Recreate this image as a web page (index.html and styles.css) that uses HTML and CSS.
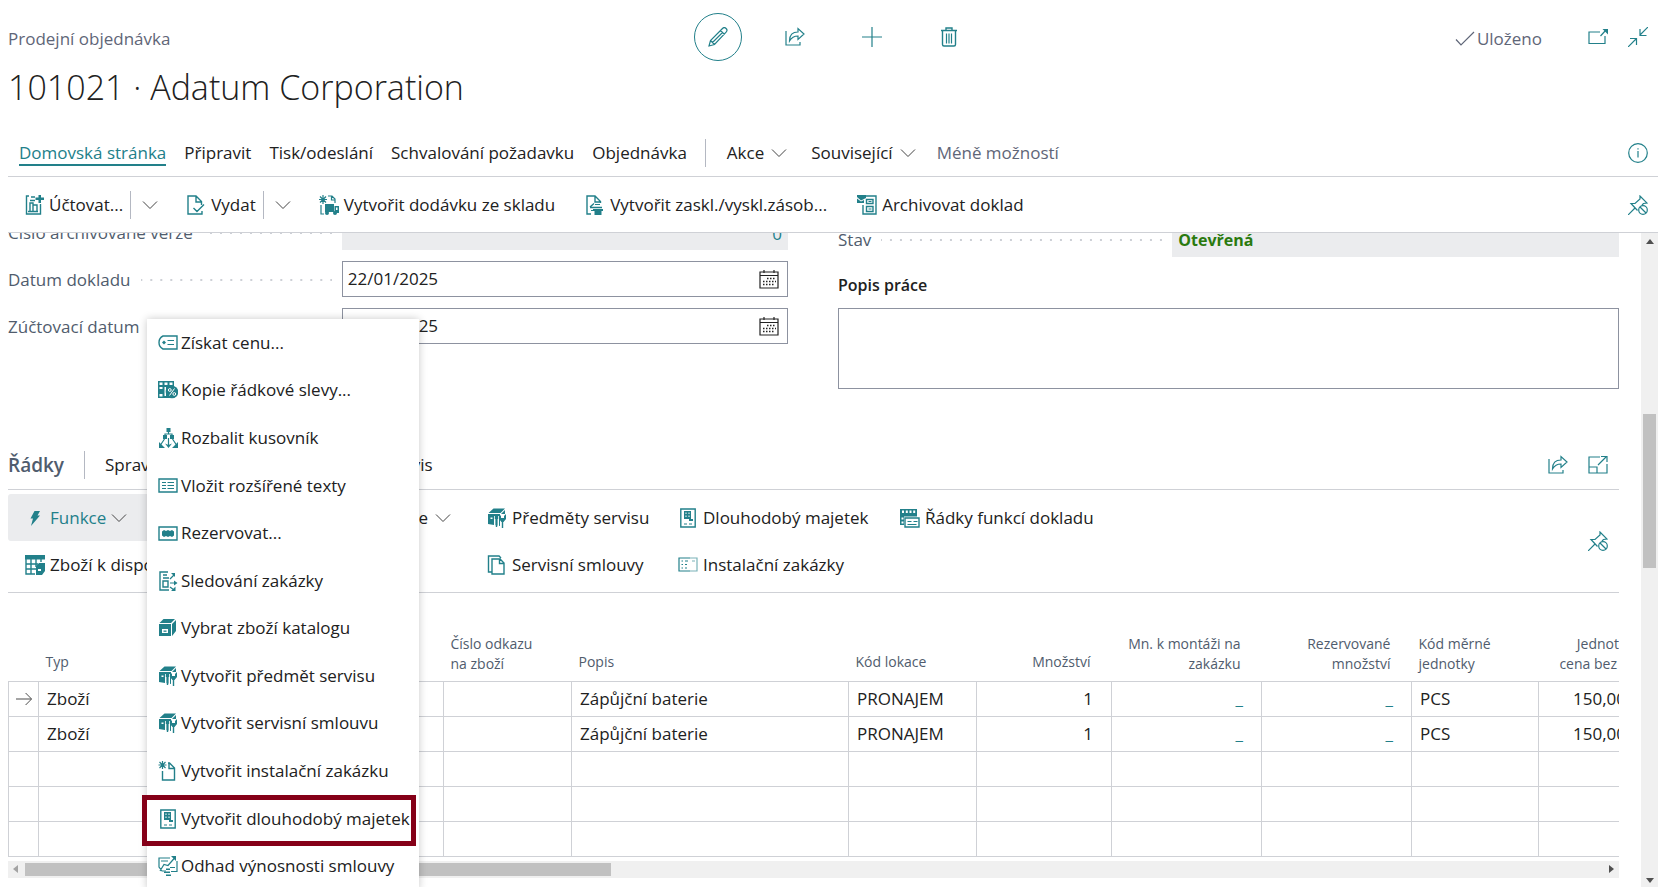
FILE: index.html
```html
<!DOCTYPE html>
<html lang="cs">
<head>
<meta charset="utf-8">
<title>101021 · Adatum Corporation</title>
<link rel="stylesheet" href="styles.css">
</head>
<body>
<svg class="sprite" aria-hidden="true">
  <symbol id="i-chev" viewBox="0 0 16 16"><path class="s thin" d="M1 4.500l7 7 7-7"/></symbol>
  <symbol id="i-pencil" viewBox="0 0 20 20"><path class="s" d="M1 19l1.500-5.500L14.500 1.500a2.200 2.200 0 0 1 3.600 3.600L6.500 17.500zM2.500 13.500l4 4M12.500 3.500l4 4M4.500 15.500l10-10"/></symbol>
  <symbol id="i-share" viewBox="0 0 20 20"><path class="s" d="M1 4v14h14v-3M4.500 14c0-6 3-9 8.500-9V1.500l6 5.500-6 5.500V9c-4 0-6.500 1.500-8.500 5z"/></symbol>
  <symbol id="i-plus" viewBox="0 0 20 20"><path class="s" d="M10 0v20M0 10h20"/></symbol>
  <symbol id="i-trash" viewBox="0 0 20 20"><path class="s w" d="M2 3.500h16M7 3V1h6v2M3.500 4v13.500q0 1.500 1.500 1.500h10q1.500 0 1.500-1.500V4"/><path class="s" d="M7.500 6.500v10M10 6.500v10M12.500 6.500v10"/></symbol>
  <symbol id="i-check" viewBox="0 0 20 20"><path class="s" d="M1 10.500l5 5.500L19 3"/></symbol>
  <symbol id="i-popout" viewBox="0 0 20 20"><path class="s" d="M12 5H1v11.500h16V9M12.500 9L18 3"/><path class="f" d="M14.500 2H20v5.500z"/></symbol>
  <symbol id="i-collapse" viewBox="0 0 20 20"><path class="s" d="M20 0l-8 8M12 2v6.500h6.500M0 20l8-8M8.500 18v-6.500H2"/></symbol>
  <symbol id="i-info" viewBox="0 0 20 20"><circle class="s" cx="10" cy="10" r="9.300"/><path class="s" d="M10 8v6.500M10 5.200v1.300"/></symbol>
  <symbol id="i-pin" viewBox="0 0 20 20"><path class="s" d="M0 20l7-7M9.500 15.500L3 8.500h4L12 4V1l7 7-3.500.5-1.500 1.500"/><circle class="s" cx="15" cy="15" r="4.300"/><path class="s" d="M12 12l6 6"/></symbol>
  <symbol id="i-expand" viewBox="0 0 20 20"><path class="s" d="M12 2H1v16h18V9M1 12h8v6M10 10l8-8M13 1.500h6V7"/></symbol>
  <symbol id="i-post" viewBox="0 0 20 20"><path class="s w" d="M5 1H2.500v18h14V9M7 2h4M6 5.500h5M6 16V8h3v8M9 10h4v6M4 16.500h10"/><path class="f" d="M14.500 0h2.500v2.500h3v2.500h-3v3h-2.500V5h-3V2.500h3z"/></symbol>
  <symbol id="i-release" viewBox="0 0 20 20"><path class="s w" d="M16 16v3H2V1h8l5.500 5.500V10M10 1v6h5.500M7.500 13l3.500 3.500 7-7"/></symbol>
  <symbol id="i-ship" viewBox="0 0 20 20"><path class="s" d="M4 0v9M0 4.500h8M1 1.500l6 6M7 1.500l-6 6M9 1h4l3 3v4M12.500 1v4H16M2 10v9h3"/><path class="f" d="M6 9h9v8H6zM15.500 11H20v7h-4.500z"/><circle class="f" cx="8" cy="18" r="2"/><circle class="f" cx="16" cy="18" r="2"/><path class="k" d="M17 12.500h1.500V15H17z"/></symbol>
  <symbol id="i-put" viewBox="0 0 20 20"><path class="s w" d="M6 19H2V1h8l5.500 5.500V8M10 1v6h5.500M5 12.500h12M5 12l4-3.500"/><path class="s" d="M10 9.500h5M6 15.500h3"/><path class="f" d="M8 14h10v2h-1.500v4H9.500v-4H8z"/></symbol>
  <symbol id="i-archive" viewBox="0 0 20 20"><path class="f" d="M0 0h9v3L4 5.500 0 2z"/><path class="f" d="M0 3.500l4 3L7 5v3H0z"/><path class="s w" d="M9 1h10v18H6v-9M9.500 4.500h6.500v4H9.500zM9.500 11.500h6.500v5H9.500z"/><path class="s" d="M11.500 6.500h3M11.500 14h3"/></symbol>
  <symbol id="i-cal" viewBox="0 0 20 20"><path class="s" d="M1 3h18v16H1zM1 6.500h18M5 1v3M15 1v3"/><path class="s dots" d="M8 9.500h9M4 12.500h13M4 15.500h11"/></symbol>
  <symbol id="i-price" viewBox="0 0 20 20"><path class="s w" d="M5 3h14v13H5q-4-2-4-6.500T5 3z"/><path class="s" d="M9.500 7.500H16M9.500 11.500H16"/><path class="f" d="M6 7.500l2 2-2 2-2-2z"/></symbol>
  <symbol id="i-disc" viewBox="0 0 20 20"><path class="f" d="M0 1h16v17H0z"/><path class="k" d="M1.500 2.500h3v2.500h-3zM6.500 2.500h3V5h-3zM11.500 2.500h3V5h-3zM1.500 7h3v2h-3zM6.500 7H8v9H6.500zM1.500 14h3v2.500h-3z"/><circle class="f" cx="14" cy="12" r="6.300"/><path class="ks" d="M11.500 15.500l5-7"/><circle class="ks" cx="11.800" cy="10" r="1.400"/><circle class="ks" cx="16.300" cy="14" r="1.400"/></symbol>
  <symbol id="i-bom" viewBox="0 0 20 20"><path class="f" d="M8.500 0h4v4h-4zM5 7h4v4H5zM12 7h4v4h-4z"/><path class="s" d="M10.500 4v2.500M7 8V6h7v2M6.500 11l-4 6M14.500 11l4 6M10.500 10v8"/><path class="f" d="M1 14v6h6zM20 14v6h-6zM7 15.500l3.500 4.500 3.500-4.500-3.500 1.500z"/></symbol>
  <symbol id="i-text" viewBox="0 0 20 20"><path class="s w" d="M1 3h18v13H1z"/><path class="s" d="M4 6.500h4M9.500 6.500H16M4 9.500h4M9.500 9.500H16M4 12.500h4M9.500 12.500H16"/></symbol>
  <symbol id="i-reserve" viewBox="0 0 20 20"><path class="s w" d="M1 4h18v13H1z"/><path class="f" d="M4 8.500l2-1.500 2 1 2-1 2 1 2-1 2 1.500v4L14 14l-2-1-2 1-2-1-2 1-2-1.500z"/></symbol>
  <symbol id="i-track" viewBox="0 0 20 20"><path class="s w" d="M10 1H2v18h9M5 4h4M5 7h6M5 10h5v6H5z"/><path class="s" d="M12 12h5M12 8l4-4M12 16l4 3"/><path class="f" d="M13 2h4v4zM16 9.500l3.500 2.500-3.500 2.500zM13 20h4.500v-4.500z"/></symbol>
  <symbol id="i-box" viewBox="0 0 20 20"><path class="f" d="M1 6h12v12H1zM14 6l4-4v11l-4 5zM1.500 5l4-4h11.500l-4 4z"/><path class="k" d="M4 11h6v4H4z"/><path class="f" d="M5.500 12.500h3v1.300h-3z"/></symbol>
  <symbol id="i-service" viewBox="0 0 20 20"><path class="f" d="M1 6h12v12l-12-2zM1.500 5l5-4.500H18L13.500 5zM14 6l4-4v4z"/><path class="k" d="M3.500 9.500h2V11h-2zM7 8h1.500v10H7zM10.500 8H12v11h-1.500z"/><path class="s w" d="M9.500 9v10M15.500 11v9"/><path class="f" d="M7.800 7h3.400v4H7.800zM12 6l2 2v2h3V8l2-2v5l-2.500 3h-2L12 11z"/></symbol>
  <symbol id="i-newdoc" viewBox="0 0 20 20"><path class="s w" d="M4.500 10v9h12V7l-5-5H10M11 2v5.500h5"/><path class="s" d="M4.500 0v8M.5 4h8M1.500 1l6 6M7.500 1l-6 6"/></symbol>
  <symbol id="i-asset" viewBox="0 0 20 20"><path class="s w" d="M2.800 1h14.400v18H2.800z"/><path class="s" d="M6 16h3M11 16h3"/><path class="f" d="M6 3h7v8h2v2h-4v-2H6z"/><path class="k" d="M7.500 4.500h1V6h-1zM10.500 4.500h1V6h-1zM7.500 7.500h1V9h-1zM10.500 7.500h1V9h-1z"/></symbol>
  <symbol id="i-estimate" viewBox="0 0 20 20"><path class="s" d="M12 2H1v9l3 4h4M13 15.500h6V5M2 15L6 8.500l4 1 7-8M12 11.500h5M3 5h7"/><path class="f" d="M13 0h5v5zM8 12.500h4v1.500H8zM6 15.500h6v1.500H6zM8 18.500h5V20H8z"/></symbol>
  <symbol id="i-bolt" viewBox="0 0 20 20"><path class="f" d="M9.500 3h5.500l-2.500 4.500H15L6 18l2-7.500H5.500z"/></symbol>
  <symbol id="i-grid" viewBox="0 0 20 20"><path class="f" d="M0 0h20v4.500H0z"/><path class="s w" d="M1 4v15h9M1 9h12M1 14h10M6 4v15M11 4v8M16 4v3"/><path class="f" d="M11 11l3-3h6v8l-3 4h-6z"/><path class="k" d="M13 14h3v2h-3z"/></symbol>
  <symbol id="i-docs" viewBox="0 0 20 20"><path class="s w" d="M5 17H1.500V1H12l2 2M5 4h8l4 4v11H5zM12.500 4v4.500H17"/></symbol>
  <symbol id="i-install" viewBox="0 0 20 20"><path class="s" d="M12 3H1v13h11"/><path class="s pale" d="M12 3h7v13h-7M14 6h3"/><path class="s" d="M3.500 6H5M3.500 9.500H5M3.500 13H5M7 6h3M7 9.500h2M7 13h2"/></symbol>
  <symbol id="i-lines" viewBox="0 0 20 20"><path class="f" d="M0 1h17v8H5v8H0z"/><path class="k" d="M2 2.500h2v2.500H2zM5.800 2.500h2V5h-2zM9.500 2.500h2V5h-2zM13.200 2.500h2V5h-2zM1.500 9.500h2v2h-2zM1.500 13.500h2v2h-2z"/><path class="k" d="M4 8.500h16V20H4z"/><path class="s w" d="M5 10h14v9H5z"/><path class="s" d="M7.500 13.500h4M7.500 16.500h9M13.500 13.500h4"/></symbol>
  <symbol id="i-arrow" viewBox="0 0 20 20"><path class="s" d="M0 10h19M12 2.500l7.500 7.500-7.500 7.500"/></symbol>
</svg>

<div class="page">
  <header class="top">
    <span class="kind">Prodejní objednávka</span>
    <div class="top-tools">
      <button class="round" aria-label="Upravit"><svg class="ic"><use href="#i-pencil"/></svg></button>
      <button aria-label="Sdílet"><svg class="ic"><use href="#i-share"/></svg></button>
      <button aria-label="Nový"><svg class="ic"><use href="#i-plus"/></svg></button>
      <button aria-label="Odstranit"><svg class="ic"><use href="#i-trash"/></svg></button>
    </div>
    <div class="top-state">
      <span class="saved"><svg class="ic"><use href="#i-check"/></svg>Uloženo</span>
      <button aria-label="Otevřít v novém okně"><svg class="ic"><use href="#i-popout"/></svg></button>
      <button aria-label="Sbalit"><svg class="ic"><use href="#i-collapse"/></svg></button>
    </div>
  </header>
  <h1>101021 · Adatum Corporation</h1>

  <nav class="tabs">
    <a href="#" class="on">Domovská stránka</a>
    <a href="#">Připravit</a>
    <a href="#">Tisk/odeslání</a>
    <a href="#">Schvalování požadavku</a>
    <a href="#">Objednávka</a>
    <span class="rule"></span>
    <button class="more">Akce<svg class="chev"><use href="#i-chev"/></svg></button>
    <button class="more">Související<svg class="chev"><use href="#i-chev"/></svg></button>
    <a href="#" class="muted">Méně možností</a>
    <button class="end" aria-label="Informace"><svg class="ic"><use href="#i-info"/></svg></button>
  </nav>

  <div class="actions">
    <div class="split">
      <button><svg class="ic"><use href="#i-post"/></svg>Účtovat...</button>
      <button class="drop" aria-label="Další možnosti účtování"><svg class="chev"><use href="#i-chev"/></svg></button>
    </div>
    <div class="split">
      <button><svg class="ic"><use href="#i-release"/></svg>Vydat</button>
      <button class="drop" aria-label="Další možnosti vydání"><svg class="chev"><use href="#i-chev"/></svg></button>
    </div>
    <button><svg class="ic"><use href="#i-ship"/></svg>Vytvořit dodávku ze skladu</button>
    <button><svg class="ic"><use href="#i-put"/></svg>Vytvořit zaskl./vyskl.zásob...</button>
    <button><svg class="ic"><use href="#i-archive"/></svg>Archivovat doklad</button>
    <button class="end" aria-label="Odepnout"><svg class="ic"><use href="#i-pin"/></svg></button>
  </div>

  <div class="scroller">
    <main>
      <div class="form">
        <div class="col">
          <div class="field"><label for="f-arch">Číslo archivované verze</label><i class="dotline"></i><input id="f-arch" class="ro num" value="0" readonly></div>
          <div class="field"><label for="f-doc">Datum dokladu</label><i class="dotline"></i><span class="date"><input id="f-doc" value="22/01/2025"><svg class="ic"><use href="#i-cal"/></svg></span></div>
          <div class="field"><label for="f-post">Zúčtovací datum</label><i class="dotline"></i><span class="date"><input id="f-post" value="22/01/2025"><svg class="ic"><use href="#i-cal"/></svg></span></div>
        </div>
        <div class="col right">
          <div class="field"><label for="f-state">Stav</label><i class="dotline"></i><input id="f-state" class="ro state" value="Otevřená" readonly></div>
          <label class="work" for="f-work">Popis práce</label>
          <textarea id="f-work"></textarea>
        </div>
      </div>

      <section>
        <div class="lines-head">
          <h2>Řádky</h2>
          <span class="rule"></span>
          <a href="#">Spravovat</a>
          <a href="#">Servis</a>
          <div class="head-tools">
            <button aria-label="Sdílet řádky"><svg class="ic"><use href="#i-share"/></svg></button>
            <button aria-label="Rozbalit řádky"><svg class="ic"><use href="#i-expand"/></svg></button>
          </div>
        </div>
        <div class="lines-actions">
          <div class="grid">
            <button class="func" aria-haspopup="menu" aria-expanded="true"><svg class="ic"><use href="#i-bolt"/></svg>Funkce<svg class="chev"><use href="#i-chev"/></svg></button>
            <button class="last">Objednávce<svg class="chev"><use href="#i-chev"/></svg></button>
            <button><svg class="ic"><use href="#i-service"/></svg>Předměty servisu</button>
            <button><svg class="ic"><use href="#i-asset"/></svg>Dlouhodobý majetek</button>
            <button><svg class="ic"><use href="#i-lines"/></svg>Řádky funkcí dokladu</button>
            <button class="avail"><svg class="ic"><use href="#i-grid"/></svg>Zboží k dispozici</button>
            <button><svg class="ic"><use href="#i-docs"/></svg>Servisní smlouvy</button>
            <button><svg class="ic"><use href="#i-install"/></svg>Instalační zakázky</button>
          </div>
          <button class="end" aria-label="Odepnout řádky"><svg class="ic"><use href="#i-pin"/></svg></button>
        </div>
        <div class="table-wrap">
          <table>
            <colgroup><col class="c30"><col class="c405"><col class="c128"><col class="c277"><col class="c128"><col class="c135"><col class="c150"><col class="c150"><col class="c127"><col class="c132"></colgroup>
            <thead><tr><th></th><th class="one">Typ</th><th>Číslo odkazu<br>na zboží</th><th class="one">Popis</th><th class="one">Kód lokace</th><th class="one r">Množství</th><th class="r">Mn. k montáži na<br>zakázku</th><th class="r">Rezervované<br>množství</th><th>Kód měrné<br>jednotky</th><th class="r">Jednotková<br>cena bez DPH</th></tr></thead>
            <tbody>
              <tr><td class="mark"><svg class="chev"><use href="#i-arrow"/></svg></td><td>Zboží</td><td></td><td>Zápůjční baterie</td><td>PRONAJEM</td><td class="r">1</td><td class="r"><a href="#">_</a></td><td class="r"><a href="#">_</a></td><td>PCS</td><td class="price">150,000</td></tr>
              <tr><td></td><td>Zboží</td><td></td><td>Zápůjční baterie</td><td>PRONAJEM</td><td class="r">1</td><td class="r"><a href="#">_</a></td><td class="r"><a href="#">_</a></td><td>PCS</td><td class="price">150,000</td></tr>
              <tr><td></td><td></td><td></td><td></td><td></td><td></td><td></td><td></td><td></td><td></td></tr>
              <tr><td></td><td></td><td></td><td></td><td></td><td></td><td></td><td></td><td></td><td></td></tr>
              <tr><td></td><td></td><td></td><td></td><td></td><td></td><td></td><td></td><td></td><td></td></tr>
            </tbody>
          </table>
        </div>
        <div class="hbar"><i class="tri left"></i><i class="thumb"></i><i class="tri rightward"></i></div>
      </section>
    </main>
    <div class="vbar"><i class="tri up"></i><i class="thumb"></i><i class="tri down"></i></div>

    <ul class="menu">
      <li><button><svg class="ic"><use href="#i-price"/></svg>Získat cenu...</button></li>
      <li><button><svg class="ic"><use href="#i-disc"/></svg>Kopie řádkové slevy...</button></li>
      <li><button><svg class="ic"><use href="#i-bom"/></svg>Rozbalit kusovník</button></li>
      <li><button><svg class="ic"><use href="#i-text"/></svg>Vložit rozšířené texty</button></li>
      <li><button><svg class="ic"><use href="#i-reserve"/></svg>Rezervovat...</button></li>
      <li><button><svg class="ic"><use href="#i-track"/></svg>Sledování zakázky</button></li>
      <li><button><svg class="ic"><use href="#i-box"/></svg>Vybrat zboží katalogu</button></li>
      <li><button><svg class="ic"><use href="#i-service"/></svg>Vytvořit předmět servisu</button></li>
      <li><button><svg class="ic"><use href="#i-service"/></svg>Vytvořit servisní smlouvu</button></li>
      <li><button><svg class="ic"><use href="#i-newdoc"/></svg>Vytvořit instalační zakázku</button></li>
      <li class="picked"><button><svg class="ic"><use href="#i-asset"/></svg>Vytvořit dlouhodobý majetek</button></li>
      <li><button><svg class="ic"><use href="#i-estimate"/></svg>Odhad výnosnosti smlouvy</button></li>
    </ul>
  </div>
</div>
</body>
</html>
```
FILE: styles.css
```css
:root {
  --teal: #22808a;
  --ink: #212121;
  --label: #505c6d;
  --line: #cfd1d6;
  --edge: #8d92a0;
}
* { box-sizing: border-box; }
body {
  margin: 0;
  background: #fff;
  color: var(--ink);
  font: 17px/24px "Open Sans", "Noto Sans", sans-serif;
}
button, input, textarea { font: inherit; color: inherit; margin: 0; }
button {
  display: inline-flex;
  align-items: center;
  padding: 0;
  border: 0;
  background: none;
  white-space: nowrap;
}
a { color: inherit; text-decoration: none; white-space: nowrap; }
.sprite { position: absolute; width: 0; height: 0; }
.ic { width: 20px; height: 20px; flex: none; color: var(--teal); }
.chev { width: 16px; height: 16px; flex: none; color: #444; }
.s { fill: none; stroke: currentColor; stroke-width: 1.2; }
.w { stroke-width: 1.4; }
.thin { stroke-width: 1; }
.pale { opacity: .6; }
.f { fill: currentColor; }
.k { fill: #fff; }
.ks { fill: none; stroke: #fff; stroke-width: 1; }
.dots { stroke-dasharray: 1.500 1.500; stroke-width: 1.5; }

.page {
  display: flex;
  flex-direction: column;
  height: 100vh;
  padding: 13px 7px 0 8px;
  overflow: hidden;
}
.top { display: grid; grid-template-columns: 1fr auto 1fr; align-items: center; }
.kind, .saved, .muted { color: #5f6678; }
.kind, .saved { padding-top: 3px; }
.top-tools { display: flex; gap: 29px; }
.top-tools button { width: 48px; height: 48px; justify-content: center; }
.round { border: 1px solid var(--teal); border-radius: 50%; }
.top-state { display: flex; justify-content: flex-end; align-items: center; gap: 20px; padding-right: 10px; }
.saved { display: flex; align-items: center; gap: 2px; margin-right: 26px; }
.saved .ic { color: inherit; }
h1 { margin: 0; padding-top: 2px; font-size: 34px; line-height: 48px; font-weight: 300; }

.tabs {
  display: flex;
  align-items: center;
  gap: 18px;
  height: 66px;
  padding: 19px 10px 0 11px;
  border-bottom: 1px solid var(--line);
}
.tabs .on { color: var(--teal); box-shadow: 0 2px 0 var(--teal); line-height: 22px; }
.tabs .more { gap: 7px; margin: 0 3px; }
.rule { width: 1px; height: 28px; background: #b4b8c2; }
.end { margin-left: auto; }

.actions {
  display: flex;
  align-items: center;
  height: 56px;
  padding: 0 10px 0 16px;
  gap: 30px;
  flex: none;
  border-bottom: 1px solid var(--line);
}
.actions button { gap: 5px; }
.split { display: flex; align-items: center; gap: 7px; margin-right: -2px; }
.actions .drop { height: 28px; padding-left: 11px; border-left: 1px solid #b4b8c2; }

.scroller { position: relative; flex: 1; min-height: 0; display: flex; }
main { flex: 1; min-width: 0; overflow: hidden; padding-right: 22px; }
.form { display: grid; grid-template-columns: 780fr 781fr; gap: 50px; margin-top: -19px; }
.col { display: flex; flex-direction: column; gap: 11px; }
.right { padding-top: 7px; }
.field { display: grid; grid-template-columns: auto 1fr 57.2%; align-items: center; color: var(--label); }
.field label { padding-top: 2px; }
.dotline {
  height: 2px;
  margin: 2px 10px 0;
  background: linear-gradient(90deg, transparent 8px, #cdd0d6 8px) right top / 10px 2px;
}
.ro, .date { width: 100%; height: 36px; }
.ro { border: 0; padding: 2px 6px 0; background: #ebecee; }
.num { text-align: right; color: var(--teal); }
.state { color: #2a7a0e; font-weight: 700; font-size: 16px; }
.date { display: flex; align-items: center; padding-right: 8px; border: 1px solid var(--edge); }
.date input { flex: 1; min-width: 0; border: 0; padding: 0 5px; color: var(--ink); }
.date .ic { color: #222; }
.work { margin-top: 5px; font-size: 16px; font-weight: 600; line-height: 24px; }
.right textarea { height: 81px; border: 1px solid var(--edge); resize: none; }

.lines-head {
  display: grid;
  grid-template-columns: 76px 21px 281px auto 1fr;
  align-items: center;
  height: 50px;
  margin-top: 51px;
  border-bottom: 1px solid var(--line);
}
h2 { margin: 0; font-size: 19px; line-height: 26px; font-weight: 600; color: var(--label); }
.head-tools { display: flex; justify-content: flex-end; gap: 20px; padding-right: 11px; }
.lines-actions { display: flex; align-items: center; padding: 4px 11px 4px 0; border-bottom: 1px solid var(--line); }
.grid { display: grid; grid-template-columns: 300px 179px 191px 222px auto; grid-auto-rows: 47px; }
.grid button { gap: 5px; }
.grid .func { justify-self: start; width: 160px; padding-left: 17px; background: #ebecee; color: var(--teal); border-radius: 3px; }
.grid .last { justify-self: end; padding-right: 36px; gap: 7px; }
.grid .avail { grid-column: 1 / 3; padding-left: 17px; }

.table-wrap { overflow: hidden; padding-top: 38px; }
table { width: 1662px; table-layout: fixed; border-collapse: collapse; }
.c30 { width: 30px; } .c405 { width: 405px; } .c128 { width: 128px; } .c277 { width: 277px; }
.c135 { width: 135px; } .c150 { width: 150px; } .c127 { width: 127px; } .c132 { width: 132px; }
th {
  height: 50px;
  padding: 0 7px 7px;
  font-size: 14px;
  line-height: 20px;
  font-weight: 400;
  text-align: left;
  vertical-align: bottom;
  white-space: nowrap;
  color: var(--label);
}
th.one { padding-bottom: 9px; }
td { height: 35px; padding: 0 8px; border: 1px solid var(--line); white-space: nowrap; }
th.r { text-align: right; padding-right: 21px; }
td.r { text-align: right; padding-right: 18px; }
td a { color: var(--teal); }
td.price { padding-left: 34px; }
td.mark { padding: 0 7px; }
.mark .chev { display: block; }

.hbar { display: flex; align-items: center; height: 17px; margin-top: 4px; padding: 0 5px; background: #f0f0f0; }
.hbar .thumb { width: 586px; height: 13px; margin: 0 auto 0 7px; background: #c1c1c1; }
.vbar { display: flex; flex-direction: column; align-items: center; width: 17px; padding: 6px 0 4px; background: #f0f0f0; }
.vbar .thumb { width: 13px; height: 154px; margin: 170px 0 auto; background: #c1c1c1; }
.tri { width: 0; height: 0; border: 4px solid transparent; flex: none; }
.up { border-top: 0; border-bottom: 5px solid #505050; }
.down { border-bottom: 0; border-top: 5px solid #505050; }
.left { border-left: 0; border-right: 5px solid #a3a3a3; }
.rightward { border-right: 0; border-left: 5px solid #505050; }

.menu {
  position: absolute;
  left: 139px;
  top: 86px;
  width: 272px;
  height: 571px;
  display: flex;
  flex-direction: column;
  margin: 0;
  padding: 0;
  list-style: none;
  background: #fff;
  box-shadow: 0 0 8px rgba(0, 0, 0, .22);
}
.menu li { position: relative; flex: 1; display: flex; }
.menu button { flex: 1; gap: 3px; padding-left: 11px; }
.picked::after {
  content: "";
  position: absolute;
  inset: 0 3px -4px -5px;
  border: 5px solid #850018;
  pointer-events: none;
}
```
